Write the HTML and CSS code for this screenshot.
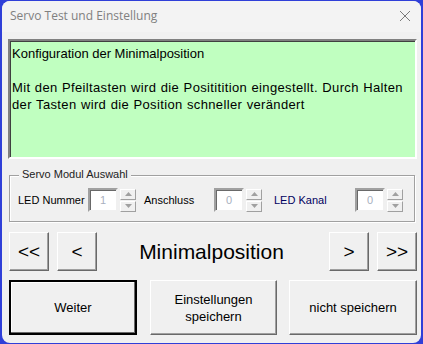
FILE: index.html
```html
<!DOCTYPE html>
<html>
<head>
<meta charset="utf-8">
<link rel="stylesheet" href="styles.css">
</head>
<body>
<div class="window">
  <div class="titlebar">
    <span class="title">Servo Test und Einstellung</span>
    <svg class="close" width="12" height="12" viewBox="0 0 12 12"><path d="M1 1 L11 11 M11 1 L1 11" stroke="#7a7a7a" stroke-width="1" fill="none"/></svg>
  </div>
  <div class="content">
    <div class="info">
      <div>Konfiguration der Minimalposition</div>
      <div>&nbsp;</div>
      <div class="para">Mit den Pfeiltasten wird die Posititition eingestellt. Durch Halten<br>der Tasten wird die Position schneller verändert</div>
    </div>
    <div class="group">
      <span class="legend">Servo Modul Auswahl</span>
      <span class="lbl l1">LED Nummer</span>
      <div class="spin"><div class="num">1</div><div class="arrows"><div class="ar up"><svg width="7" height="4" viewBox="0 0 7 4"><path d="M0 4 L3.5 0 L7 4Z" fill="#a0a0a0"/></svg></div><div class="ar dn"><svg width="7" height="4" viewBox="0 0 7 4"><path d="M0 0 L3.5 4 L7 0Z" fill="#a0a0a0"/></svg></div></div></div>
      <span class="lbl l2">Anschluss</span>
      <div class="spin"><div class="num">0</div><div class="arrows"><div class="ar up"><svg width="7" height="4" viewBox="0 0 7 4"><path d="M0 4 L3.5 0 L7 4Z" fill="#a0a0a0"/></svg></div><div class="ar dn"><svg width="7" height="4" viewBox="0 0 7 4"><path d="M0 0 L3.5 4 L7 0Z" fill="#a0a0a0"/></svg></div></div></div>
      <span class="lbl l3 navy">LED Kanal</span>
      <div class="spin"><div class="num">0</div><div class="arrows"><div class="ar up"><svg width="7" height="4" viewBox="0 0 7 4"><path d="M0 4 L3.5 0 L7 4Z" fill="#a0a0a0"/></svg></div><div class="ar dn"><svg width="7" height="4" viewBox="0 0 7 4"><path d="M0 0 L3.5 4 L7 0Z" fill="#a0a0a0"/></svg></div></div></div>
    </div>
    <div class="nav">
      <div class="btn nb">&lt;&lt;</div>
      <div class="btn nb">&lt;</div>
      <div class="pos">Minimalposition</div>
      <div class="btn nb">&gt;</div>
      <div class="btn nb">&gt;&gt;</div>
    </div>
    <div class="actions">
      <div class="btn ab def">Weiter</div>
      <div class="btn ab">Einstellungen<br>speichern</div>
      <div class="btn ab">nicht speichern</div>
    </div>
  </div>
</div>
</body>
</html>
```

FILE: styles.css
```css
html, body {
  margin: 0;
  padding: 0;
}
body {
  width: 423px;
  height: 344px;
  overflow: hidden;
  background: #2f3fd8;
  font-family: "Liberation Sans", Arial, sans-serif;
}
.window {
  margin: 1px 0 0 2px;
  width: 419px;
  height: 342px;
  background: #f0f0f0;
  border-radius: 8px;
  overflow: hidden;
  box-sizing: border-box;
}
.titlebar {
  height: 31px;
  background: #f3f3f3;
  display: flex;
  align-items: center;
  justify-content: space-between;
  padding: 0 10px 0 8px;
}
.title {
  font-family: "Open Sans", "Liberation Sans", sans-serif;
  font-size: 12px;
  color: #808080;
  position: relative;
  top: -1px;
}
.close {
  position: relative;
  top: -1px;
}
.content {
  padding: 7px 4px 0 6px;
}
.info {
  height: 120px;
  box-sizing: border-box;
  background: #c0ffc0;
  border-style: solid;
  border-width: 2px;
  border-color: #808080 #ffffff #ffffff #808080;
  box-shadow: inset 1px 1px 0 #404040;
  padding: 4px 2px;
  font-size: 13px;
  line-height: 17px;
  color: #000;
  white-space: nowrap;
}
.para {
  letter-spacing: 0.35px;
  word-spacing: 0.5px;
}
.group {
  margin: 16px 2px 0 1px;
  height: 47px;
  box-sizing: border-box;
  border: 1px solid #a0a0a0;
  box-shadow: 1px 1px 0 #ffffff, inset 1px 1px 0 #ffffff;
  display: flex;
  align-items: center;
  padding-top: 3px;
  font-size: 11px;
  color: #000;
  position: relative;
}
.legend {
  position: absolute;
  left: 9px;
  top: -8px;
  padding: 0 3px;
  background: #f0f0f0;
  font-size: 11px;
  color: #222;
  white-space: nowrap;
}
.lbl {
  white-space: nowrap;
  flex: none;
}
.l1 { margin-left: 8px; width: 70px; }
.l2 { margin-left: 8px; width: 70px; }
.l3 { margin-left: 12px; width: 81px; }
.navy { color: #000060; }
.spin {
  display: flex;
  align-items: center;
  flex: none;
}
.num {
  width: 30px;
  height: 24px;
  box-sizing: border-box;
  background: #fff;
  border-style: solid;
  border-width: 2px;
  border-color: #a0a0a0 #f0f0f0 #f0f0f0 #a0a0a0;
  box-shadow: inset 1px 1px 0 #696969;
  color: #a8b0c0;
  font-size: 11px;
  text-align: center;
  line-height: 20px;
}
.arrows {
  margin-left: 2px;
  display: flex;
  flex-direction: column;
}
.ar {
  width: 16px;
  height: 11px;
  box-sizing: border-box;
  background: #f0f0f0;
  border-style: solid;
  border-width: 1px;
  border-color: #ffffff #a0a0a0 #a0a0a0 #ffffff;
  display: flex;
  align-items: center;
  justify-content: center;
}
.ar.dn { margin-top: 1px; }
.btn {
  background: #f0f0f0;
  box-sizing: border-box;
  border-style: solid;
  border-width: 1px;
  border-color: #ffffff #696969 #696969 #ffffff;
  box-shadow: inset -1px -1px 0 #a0a0a0;
  display: flex;
  align-items: center;
  justify-content: center;
  text-align: center;
  color: #000;
}
.nav {
  display: flex;
  align-items: center;
  margin-top: 10px;
  padding: 0 0 0 1px;
}
.nb {
  width: 40px;
  height: 39px;
  font-size: 19px;
  flex: none;
}
.nb:first-child { margin-right: 8px; }
.nb:nth-child(4) { margin-right: 8px; }
.pos {
  flex: 1;
  text-align: center;
  font-size: 21px;
  margin: 0 8px;
  padding-right: 3px;
}
.actions {
  display: flex;
  margin-top: 9px;
  padding-left: 1px;
  gap: 13px;
}
.ab {
  width: 128px;
  height: 55px;
  font-size: 13px;
  line-height: 17px;
}
.ab:nth-child(2) { width: 127px; margin-right: -1px; }
.def {
  border: 2px solid #000;
  border-color: #000;
  box-shadow: inset -1px -1px 0 #696969, inset 1px 1px 0 #ffffff;
}
```
